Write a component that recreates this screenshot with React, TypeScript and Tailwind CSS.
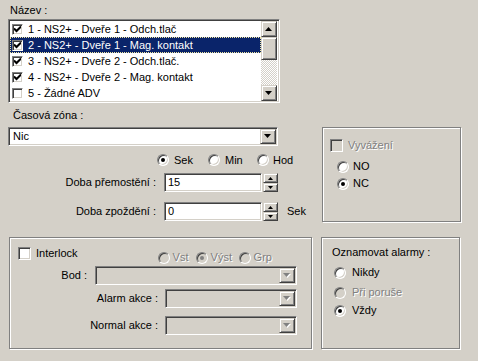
import React from "react";

const sunken =
  "border border-t-[#808080] border-l-[#808080] border-r-white border-b-white shadow-[inset_1px_1px_0_#404040,inset_-1px_-1px_0_#d4d0c8]";
const raised =
  "border border-t-[#d4d0c8] border-l-[#d4d0c8] border-r-[#404040] border-b-[#404040] shadow-[inset_1px_1px_0_#fff,inset_-1px_-1px_0_#808080] bg-[#d4d0c8]";
const etched = "border border-[#808080] shadow-[inset_1px_1px_0_#fff,1px_1px_0_#fff]";
const grayText = "text-[#808080] [text-shadow:1px_1px_0_#fff]";

function Arrow({ dir = "down", disabled = false }: { dir?: "up" | "down"; disabled?: boolean }) {
  const pts = dir === "down" ? "0,0 7,0 3.5,4" : "3.5,0 7,4 0,4";
  return (
    <svg width="8" height="5" viewBox="0 0 8 5">
      {disabled && <polygon points={pts} fill="#fff" transform="translate(1,1)" />}
      <polygon points={pts} fill={disabled ? "#808080" : "#000"} />
    </svg>
  );
}

function SmallArrow({ dir }: { dir: "up" | "down" }) {
  const pts = dir === "down" ? "0,0 5,0 2.5,3" : "2.5,0 5,3 0,3";
  return (
    <svg width="5" height="3" viewBox="0 0 5 3">
      <polygon points={pts} fill="#000" />
    </svg>
  );
}

function Check({ checked, disabled = false, small = false }: { checked: boolean; disabled?: boolean; small?: boolean }) {
  return (
    <div
      className={`${sunken} ${small ? "w-[11px] h-[11px]" : "w-[13px] h-[13px]"} ${
        disabled ? "bg-[#d4d0c8]" : "bg-white"
      } flex items-center justify-center shrink-0`}
    >
      {checked && (
        <svg width="7" height="7" viewBox="0 0 7 7">
          <path d="M0 2.5 L2.5 5 L7 0.5" stroke="#000" strokeWidth="2" fill="none" />
        </svg>
      )}
    </div>
  );
}

function Radio({ checked, disabled = false }: { checked: boolean; disabled?: boolean }) {
  return (
    <div
      className={`w-[12px] h-[12px] rounded-full border border-t-[#808080] border-l-[#808080] border-r-white border-b-white shadow-[inset_1px_1px_0_#404040,inset_-1px_-1px_0_#d4d0c8] ${
        disabled ? "bg-[#d4d0c8]" : "bg-white"
      } flex items-center justify-center shrink-0`}
    >
      {checked && <div className={`w-[4px] h-[4px] rounded-full ${disabled ? "bg-[#808080]" : "bg-black"}`} />}
    </div>
  );
}

function Combo({ width, value, disabled = false }: { width: string; value?: string; disabled?: boolean }) {
  return (
    <div className={`${sunken} ${width} h-[19px] ${disabled ? "bg-[#d4d0c8]" : "bg-white"} flex items-center p-[1px]`}>
      <div className="flex-1 pl-[3px] leading-[15px]">{value}</div>
      <div className={`${raised} w-[16px] h-[15px] flex items-center justify-center`}>
        <Arrow disabled={disabled} />
      </div>
    </div>
  );
}

function Spin({ value }: { value: string }) {
  return (
    <div className="flex">
      <div className={`${sunken} w-[98px] h-[19px] bg-white pl-[3px] leading-[17px]`}>{value}</div>
      <div className="ml-[1px] flex flex-col w-[15px] h-[19px]">
        <div className={`${raised} h-[10px] flex items-center justify-center`}>
          <SmallArrow dir="up" />
        </div>
        <div className={`${raised} h-[9px] flex items-center justify-center`}>
          <SmallArrow dir="down" />
        </div>
      </div>
    </div>
  );
}

const items = [
  { t: "1 - NS2+ - Dveře 1 - Odch.tlač", c: true },
  { t: "2 - NS2+ - Dveře 1 - Mag. kontakt", c: true, sel: true },
  { t: "3 - NS2+ - Dveře 2 - Odch.tlač.", c: true },
  { t: "4 - NS2+ - Dveře 2 - Mag. kontakt", c: true },
  { t: "5 - Žádné ADV", c: false },
];

export default function App() {
  return (
    <div className="w-[478px] h-[361px] bg-[#d4d0c8] pl-[8px] pt-[5px] text-[11px] leading-[13px] text-black font-['Liberation_Sans',Arial,sans-serif] overflow-hidden">
      <div className="pl-[2px] h-[14px] leading-[11px]">Název :</div>

      {/* list box */}
      <div className={`${sunken} w-[272px] h-[84px] bg-white p-[1px] flex`}>
        <div className="w-[251px] flex flex-col">
          {items.map((it) => (
            <div
              key={it.t}
              className={`h-[16px] flex items-center ${
                it.sel ? "bg-[#0a246a] text-white outline outline-1 outline-dotted outline-[#f0e6a0] -outline-offset-1" : ""
              }`}
            >
              <div className="ml-[2px]">
                <Check checked={it.c} small />
              </div>
              <span className="ml-[5px]">{it.t}</span>
            </div>
          ))}
        </div>
        <div className="w-[16px] flex flex-col">
          <div className={`${raised} h-[16px] flex items-center justify-center`}>
            <Arrow dir="up" />
          </div>
          <div className={`${raised} h-[23px]`} />
          <div className="flex-1 bg-[repeating-conic-gradient(#fff_0_25%,#d4d0c8_0_50%)] bg-[length:2px_2px]" />
          <div className={`${raised} h-[16px] flex items-center justify-center`}>
            <Arrow dir="down" />
          </div>
        </div>
      </div>

      {/* middle section */}
      <div className="flex h-[134px]">
        <div className="w-[314px] flex flex-col">
          <div className="mt-[5px] pl-[5px] h-[14px] leading-[14px]">Časová zóna :</div>
          <div className="mt-[5px]">
            <Combo width="w-[270px]" value="Nic" />
          </div>
          <div className="mt-[7px] h-[14px] flex items-center pl-[149px]">
            <div className="w-[51px] flex items-center">
              <Radio checked />
              <span className="ml-[5px]">Sek</span>
            </div>
            <div className="w-[49px] flex items-center">
              <Radio checked={false} />
              <span className="ml-[5px]">Min</span>
            </div>
            <div className="flex items-center">
              <Radio checked={false} />
              <span className="ml-[4px]">Hod</span>
            </div>
          </div>
          <div className="mt-[6px] flex items-center">
            <div className="w-[148px] text-right">Doba přemostění :</div>
            <div className="ml-[8px]">
              <Spin value="15" />
            </div>
          </div>
          <div className="mt-[10px] flex items-center">
            <div className="w-[148px] text-right">Doba zpoždění :</div>
            <div className="ml-[8px]">
              <Spin value="0" />
            </div>
            <span className="ml-[9px]">Sek</span>
          </div>
        </div>

        <div className={`${etched} mt-[24px] w-[139px] h-[95px] flex flex-col pl-[7px]`}>
          <div className="mt-[11px] flex items-center">
            <Check checked={false} disabled />
            <span className={`ml-[5px] ${grayText}`}>Vyvážení</span>
          </div>
          <div className="mt-[8px] pl-[7px] flex items-center">
            <Radio checked={false} />
            <span className="ml-[4px]">NO</span>
          </div>
          <div className="mt-[4px] pl-[7px] flex items-center">
            <Radio checked />
            <span className="ml-[4px]">NC</span>
          </div>
        </div>
      </div>

      {/* bottom section */}
      <div className="flex">
        <div className={`${etched} ml-[1px] w-[303px] h-[112px] flex flex-col`}>
          <div className="flex items-start mt-[9px]">
            <div className="ml-[8px] flex items-center">
              <Check checked={false} />
              <span className="ml-[5px]">Interlock</span>
            </div>
            <div className="ml-[80px] mt-[4px] flex items-center">
              <div className="w-[38px] flex items-center">
                <Radio checked={false} disabled />
                <span className={`ml-[3px] ${grayText}`}>Vst</span>
              </div>
              <div className="w-[43px] flex items-center">
                <Radio checked disabled />
                <span className={`ml-[3px] ${grayText}`}>Výst</span>
              </div>
              <div className="flex items-center">
                <Radio checked={false} disabled />
                <span className={`ml-[3px] ${grayText}`}>Grp</span>
              </div>
            </div>
          </div>
          <div className="mt-[2px] flex items-center">
            <div className="w-[77px] text-right">Bod :</div>
            <div className="ml-[8px]">
              <Combo width="w-[202px]" disabled />
            </div>
          </div>
          <div className="mt-[4px] flex items-center">
            <div className="w-[148px] text-right">Alarm akce :</div>
            <div className="ml-[7px]">
              <Combo width="w-[132px]" disabled />
            </div>
          </div>
          <div className="mt-[8px] flex items-center">
            <div className="w-[148px] text-right">Normal akce :</div>
            <div className="ml-[7px]">
              <Combo width="w-[132px]" disabled />
            </div>
          </div>
        </div>

        <div className={`${etched} ml-[9px] w-[139px] h-[112px] flex flex-col pl-[10px]`}>
          <div className="mt-[8px]">Oznamovat alarmy :</div>
          <div className="mt-[7px] pl-[2px] flex items-center">
            <Radio checked={false} />
            <span className="ml-[6px]">Nikdy</span>
          </div>
          <div className="mt-[7px] pl-[2px] flex items-center">
            <Radio checked={false} disabled />
            <span className={`ml-[6px] ${grayText}`}>Při poruše</span>
          </div>
          <div className="mt-[5px] pl-[2px] flex items-center">
            <Radio checked />
            <span className="ml-[6px]">Vždy</span>
          </div>
        </div>
      </div>
    </div>
  );
}
